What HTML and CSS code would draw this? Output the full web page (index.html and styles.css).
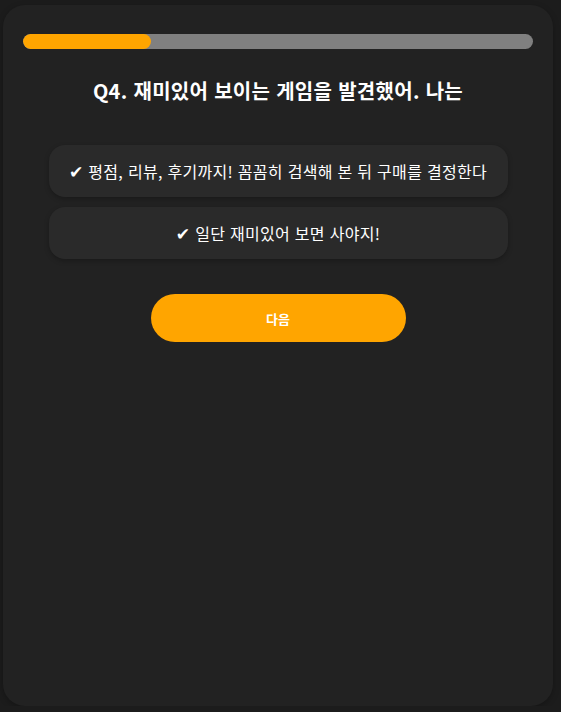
FILE: index.html
```html
<!DOCTYPE html>
<html lang="ko">
<head>
<meta charset="utf-8">
<link rel="stylesheet" href="styles.css">
</head>
<body>
<main class="card">
  <div class="progress"><div class="progress-fill" style="width:25%"></div></div>
  <h1 class="question">Q4. 재미있어 보이는 게임을 발견했어. 나는</h1>
  <div class="options">
    <button class="option"><span class="check">✔</span> 평점, 리뷰, 후기까지! 꼼꼼히 검색해 본 뒤 구매를 결정한다</button>
    <button class="option"><span class="check">✔</span> 일단 재미있어 보면 사야지!</button>
  </div>
  <button class="next">다음</button>
</main>
</body>
</html>
```
FILE: styles.css
```css
html, body {
  margin: 0;
  background: #1c1c1c;
}
body {
  padding: 5px 8px 0 3px;
  font-family: "Noto Sans CJK KR", "Noto Sans", sans-serif;
  color: #fff;
}
.card {
  box-sizing: border-box;
  width: 550px;
  height: 701px;
  background: #222222;
  border-radius: 22px;
  padding: 29px 20px 0;
  display: flex;
  flex-direction: column;
  align-items: center;
  box-shadow: 0 2px 6px rgba(0,0,0,0.25);
}
.progress {
  width: 100%;
  height: 15px;
  background: #808080;
  border-radius: 8px;
  overflow: hidden;
}
.progress-fill {
  height: 100%;
  background: #ffa500;
  border-radius: 8px;
}
.question {
  margin: 28px 0 0;
  font-size: 20px;
  line-height: 28px;
  font-weight: 700;
  letter-spacing: 0.3px;
  text-align: center;
}
.options {
  margin-top: 40px;
  width: 459px;
  display: flex;
  flex-direction: column;
  gap: 10px;
}
.option {
  height: 52px;
  border: none;
  border-radius: 16px;
  background: #2a2a2a;
  color: #fff;
  font-family: inherit;
  font-size: 16px;
  line-height: 20px;
  letter-spacing: 0.3px;
  box-shadow: 0 2px 5px rgba(0,0,0,0.25);
  padding: 0 6px;
}
.check {
  font-family: "DejaVu Sans", sans-serif;
  font-size: 17px;
  line-height: 20px;
}
.next {
  margin-top: 35px;
  width: 255px;
  height: 48px;
  border: none;
  border-radius: 24px;
  background: #ffa500;
  color: #fff;
  font-family: inherit;
  font-size: 13px;
  font-weight: 700;
}
```
